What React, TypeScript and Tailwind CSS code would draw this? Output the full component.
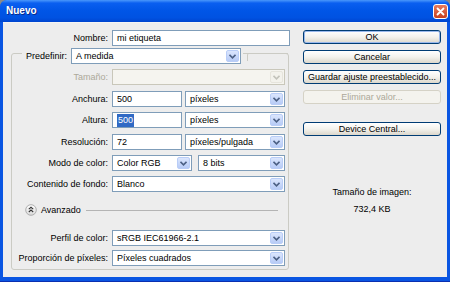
import React from 'react';

const Chevron = ({ disabled }: { disabled?: boolean }) => (
  <svg width="7" height="5" viewBox="0 0 7 5">
    <path d="M0.5 0.8 L3.5 3.8 L6.5 0.8" fill="none" stroke={disabled ? '#c3c3bb' : '#4d6185'} strokeWidth="1.6" />
  </svg>
);

const Select = ({ value, className = '', disabled }: { value?: string; className?: string; disabled?: boolean }) => (
  <div
    className={`flex h-[16px] items-center border ${
      disabled ? 'border-[#c9c7ba] bg-[#f5f4ef]' : 'border-[#7f9db9] bg-white'
    } ${className}`}
  >
    <span className="flex-1 truncate pl-[4px] leading-none">{value}</span>
    <span
      className={`mr-[1px] flex h-[12px] w-[13px] items-center justify-center rounded-[2px] border ${
        disabled
          ? 'border-[#e6e4dc] bg-[#f3f2ec]'
          : 'border-[#b9cdf7] bg-gradient-to-b from-[#dbe6fd] to-[#b7cbf6]'
      }`}
    >
      <Chevron disabled={disabled} />
    </span>
  </div>
);

const Input = ({ children, className = '' }: { children: React.ReactNode; className?: string }) => (
  <div className={`flex h-[16px] items-center border border-[#7f9db9] bg-white pl-[4px] leading-none ${className}`}>
    {children}
  </div>
);

const Row = ({ label, children, dim }: { label: string; children: React.ReactNode; dim?: boolean }) => (
  <div className="flex h-[16px] items-center">
    <div className={`w-[100px] shrink-0 pr-[4px] text-right leading-none ${dim ? 'text-[#aca899]' : ''}`}>{label}</div>
    {children}
  </div>
);

const Btn = ({ children, primary, disabled }: { children: React.ReactNode; primary?: boolean; disabled?: boolean }) => (
  <div
    className={`flex h-[14px] w-[138px] items-center justify-center rounded-[3px] border leading-none ${
      disabled
        ? 'border-[#d5d2c6] bg-[#f4f3ee] text-[#aca899]'
        : 'border-[#003c74] bg-gradient-to-b from-white via-[#f3f2ed] to-[#dcd7cc]'
    } ${primary ? 'shadow-[inset_0_0_0_1px_#9ab9ec]' : ''}`}
  >
    {children}
  </div>
);

export default function App() {
  return (
    <div className="h-[282px] w-[450px] bg-[#8a8a8a] font-['Liberation_Sans',Arial,sans-serif] text-[9px] text-black">
      <div className="flex h-full flex-col overflow-hidden rounded-t-[7px] bg-[#0a55e2]">
        {/* title bar */}
        <div className="flex h-[22px] shrink-0 items-center justify-between bg-[linear-gradient(to_bottom,#4a98fb_0%,#0a5ff0_14%,#0055e6_50%,#0052e2_80%,#0045cf_100%)] pl-[6px] pr-[2px]">
          <span className="text-[10px] font-bold leading-none text-white [text-shadow:1px_1px_0_#0a2a8a]">Nuevo</span>
          <div className="flex h-[15px] w-[15px] items-center justify-center rounded-[3px] border border-white bg-gradient-to-b from-[#e87a5c] to-[#c63f1d]">
            <svg width="9" height="9" viewBox="0 0 9 9">
              <path d="M1.5 1.5 L7.5 7.5 M7.5 1.5 L1.5 7.5" stroke="white" strokeWidth="1.8" strokeLinecap="round" />
            </svg>
          </div>
        </div>

        {/* body */}
        <div className="mx-[3px] flex flex-1 border-t border-[#f4f4f4] bg-[#ededed]">
          {/* left column */}
          <div className="w-[292px] shrink-0 pt-[7px]">
            <div className="flex h-[16px] items-center">
              <div className="w-[109px] shrink-0 pr-[4px] text-right leading-none">Nombre:</div>
              <Input className="w-[178px]">mi etiqueta</Input>
            </div>

            <div className="ml-[8px] mt-[7px] w-[278px] rounded-[3px] border border-[#cbcbc4] pb-[3px]">
              {/* legend */}
              <div className="-mt-[6px] flex h-[16px] items-start">
                <div className="w-[10px] shrink-0" />
                <div className="flex h-[16px] items-center bg-[#ededed] pl-[4px] pr-[2px]">
                  <span className="pr-[4px] leading-none">Predefinir:</span>
                  <Select value="A medida" className="w-[170px]" />
                </div>
                <div className="ml-[4px] mt-[5px] h-[8px] flex-1 rounded-tl-[2px] border-l border-t border-[#cbcbc4]" />
              </div>

              <div className="mt-[5px]">
                <Row label="Tamaño:" dim>
                  <Select disabled className="w-[173px]" />
                </Row>
              </div>
              <div className="mt-[6px]">
                <Row label="Anchura:">
                  <Input className="w-[70px]">500</Input>
                  <Select value="píxeles" className="ml-[3px] w-[100px]" />
                </Row>
              </div>
              <div className="mt-[5px]">
                <Row label="Altura:">
                  <Input className="w-[70px]">
                    <span className="bg-[#316ac5] px-[1px] py-[2px] text-white">500</span>
                  </Input>
                  <Select value="píxeles" className="ml-[3px] w-[100px]" />
                </Row>
              </div>
              <div className="mt-[6px]">
                <Row label="Resolución:">
                  <Input className="w-[70px]">72</Input>
                  <Select value="píxeles/pulgada" className="ml-[3px] w-[100px]" />
                </Row>
              </div>
              <div className="mt-[5px]">
                <Row label="Modo de color:">
                  <Select value="Color RGB" className="w-[80px]" />
                  <Select value="8 bits" className="ml-[6px] w-[87px]" />
                </Row>
              </div>
              <div className="mt-[5px]">
                <Row label="Contenido de fondo:">
                  <Select value="Blanco" className="w-[173px]" />
                </Row>
              </div>

              <div className="mt-[12px] flex h-[12px] items-center pl-[13px]">
                <svg width="12" height="12" viewBox="0 0 12 12">
                  <defs>
                    <linearGradient id="av" x1="0" y1="0" x2="0" y2="1">
                      <stop offset="0" stopColor="#ffffff" />
                      <stop offset="1" stopColor="#d8d8d8" />
                    </linearGradient>
                  </defs>
                  <circle cx="6" cy="6" r="5.3" fill="url(#av)" stroke="#a9a9a9" strokeWidth="0.9" />
                  <path d="M3.8 5.2 L6 3.3 L8.2 5.2 M3.8 8 L6 6.1 L8.2 8" fill="none" stroke="#333" strokeWidth="1.1" />
                </svg>
                <span className="ml-[4px] leading-none">Avanzado</span>
                <div className="ml-[5px] mr-[10px] h-px flex-1 bg-[#b4b4b4]" />
              </div>

              <div className="mt-[14px]">
                <Row label="Perfil de color:">
                  <Select value="sRGB IEC61966-2.1" className="w-[173px]" />
                </Row>
              </div>
              <div className="mt-[4px]">
                <Row label="Proporción de píxeles:">
                  <Select value="Píxeles cuadrados" className="w-[173px]" />
                </Row>
              </div>
            </div>
          </div>

          {/* right column */}
          <div className="ml-[8px] flex w-[138px] flex-col pt-[7px]">
            <Btn primary>OK</Btn>
            <div className="mt-[6px]">
              <Btn>Cancelar</Btn>
            </div>
            <div className="mt-[6px]">
              <Btn>Guardar ajuste preestablecido...</Btn>
            </div>
            <div className="mt-[6px]">
              <Btn disabled>Eliminar valor...</Btn>
            </div>
            <div className="mt-[18px]">
              <Btn>Device Central...</Btn>
            </div>
            <div className="mt-[51px] text-center leading-[10px]">Tamaño de imagen:</div>
            <div className="mt-[7px] text-center leading-[10px]">732,4 KB</div>
          </div>
        </div>

        {/* bottom frame */}
        <div className="h-[5px] shrink-0 border-b border-[#0a2fb0] bg-[#0a55e2]" />
      </div>
    </div>
  );
}
